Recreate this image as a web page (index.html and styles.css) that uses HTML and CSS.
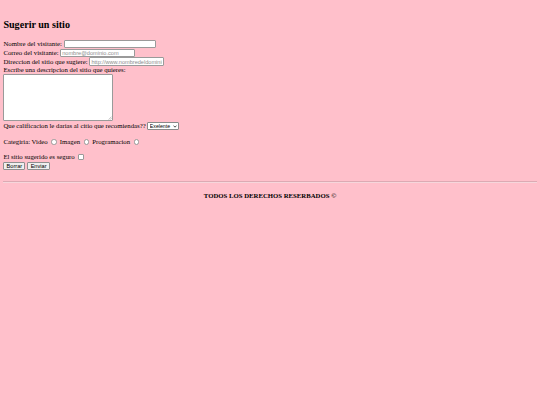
FILE: index.html
```html
<!DOCTYPE html>
<html lang="es">
<head>
<meta charset="utf-8">
<title>Sugerir un sitio</title>
<link rel="stylesheet" href="styles.css">
</head>
<body class="page">
<h2 class="title">Sugerir un sitio</h2>
<form class="form">
  <div class="row">Nombre del visitante: <input class="field field-name" type="text"></div>
  <div class="row">Correo del visitante: <input class="field" type="email" placeholder="nombre@dominio.com"></div>
  <div class="row">Direccion del sitio que sugiere: <input class="field" type="url" placeholder="http://www.nombredeldominio.com"></div>
  <div class="row row-label">Escribe una descripcion del sitio que quieres:</div>
  <div class="desc-wrap">
    <textarea class="desc"></textarea>
    <svg class="grip" width="4" height="4" viewBox="0 0 4 4"><path d="M3.6 0.6 L0.6 3.6 M3.6 2.2 L2.2 3.6" stroke="#8a8a8a" stroke-width="0.5" fill="none"/></svg>
  </div>
  <div class="row row-rating">Que calificacion le darias al citio que recomiendas??
    <span class="select-wrap">
      <select class="rating"><option>Exelente</option><option>Bueno</option><option>Regular</option></select>
      <svg class="chev" width="4" height="3" viewBox="0 0 4 3"><path d="M0.5 0.6 L2 2.2 L3.5 0.6" stroke="#222" stroke-width="0.8" fill="none"/></svg>
    </span>
  </div>
  <p class="line line-cat">Categiria: Video <input class="radio" type="radio" name="cat"> Imagen <input class="radio" type="radio" name="cat"> Programacion <input class="radio" type="radio" name="cat"></p>
  <p class="line line-safe">El sitio sugerido es seguro <input class="check" type="checkbox"></p>
  <div class="buttons"><input class="btn btn-reset" type="reset" value="Borrar"><input class="btn btn-send" type="submit" value="Enviar"></div>
</form>
<hr class="rule">
<footer class="footer"><h4 class="copy">TODOS LOS DERECHOS RESERBADOS ©</h4></footer>
</body>
</html>
```

FILE: styles.css
```css
html {
  background: #ffc0cb;
}
.page {
  margin: 0;
  padding: 18.6px 3.4px 0;
  font-family: "Liberation Serif", "Times New Roman", serif;
  font-size: 6.75px;
  line-height: 7.8px;
  color: #000;
  background: #ffc0cb;
}
.title {
  font-size: 10.1px;
  line-height: 12px;
  font-weight: bold;
  margin: 0 0 9px;
}
.form {
  margin: 0;
}
.row {
  display: flex;
  align-items: center;
  gap: 1.7px;
  height: 8.8px;
  white-space: nowrap;
}
.row-label {
  height: 7.8px;
}
.field {
  box-sizing: border-box;
  width: 75px;
  height: 8.2px;
  margin: 0;
  padding: 0 1px;
  border: 1px solid #9a9a9a;
  border-radius: 1px;
  background: #fff;
  font-family: "Liberation Sans", Arial, sans-serif;
  font-size: 5.6px;
  color: #000;
  outline: none;
}
.field::placeholder {
  color: #8c8c8c;
}
.field-name {
  width: 92.5px;
}
.desc-wrap {
  position: relative;
  width: 110px;
  height: 46.5px;
  margin-top: 0.4px;
}
.desc {
  box-sizing: border-box;
  display: block;
  width: 110px;
  height: 46.5px;
  margin: 0;
  padding: 1px;
  border: 1px solid #9a9a9a;
  border-radius: 1px;
  background: #fff;
  resize: none;
  outline: none;
}
.grip {
  position: absolute;
  right: 1px;
  bottom: 1px;
}
.row-rating {
  margin-top: 1px;
}
.select-wrap {
  position: relative;
  display: inline-block;
  height: 8px;
}
.rating {
  appearance: none;
  -webkit-appearance: none;
  box-sizing: border-box;
  display: block;
  width: 31.5px;
  height: 8px;
  margin: 0;
  padding: 0 0 0 1.5px;
  border: 1px solid #8a8a8a;
  border-radius: 1px;
  background: #fff;
  font-family: "Liberation Sans", Arial, sans-serif;
  font-size: 5.2px;
  color: #000;
}
.chev {
  position: absolute;
  right: 2px;
  top: 2.6px;
}
.line {
  display: flex;
  align-items: center;
  height: 8.8px;
  margin: 0;
  white-space: pre;
}
.line-cat {
  margin-top: 7.2px;
}
.line-safe {
  margin-top: 6.2px;
}
.radio,
.check {
  appearance: none;
  -webkit-appearance: none;
  box-sizing: border-box;
  width: 5.4px;
  height: 5.4px;
  margin: 0 1.3px 0 2.1px;
  border: 1px solid #9a9a9a;
  background: #fff;
}
.radio {
  border-radius: 50%;
}
.check {
  border-radius: 1px;
}
.buttons {
  display: flex;
  align-items: center;
  gap: 1.7px;
  height: 8.8px;
  margin-bottom: 10.6px;
}
.btn {
  box-sizing: border-box;
  height: 8px;
  margin: 0;
  padding: 0;
  border: 1px solid #8f8f8f;
  border-radius: 1px;
  background: #efefef;
  font-family: "Liberation Sans", Arial, sans-serif;
  font-size: 5.6px;
  color: #000;
}
.btn-reset {
  width: 22px;
}
.btn-send {
  width: 23px;
}
.rule {
  height: 0;
  margin: 0;
  border: 0;
  border-top: 1px solid #dcaab3;
  border-bottom: 1px solid #f6d6db;
}
.footer {
  text-align: center;
}
.copy {
  font-size: 6.75px;
  line-height: 7.8px;
  font-weight: bold;
  margin: 9.6px 0;
}
```
